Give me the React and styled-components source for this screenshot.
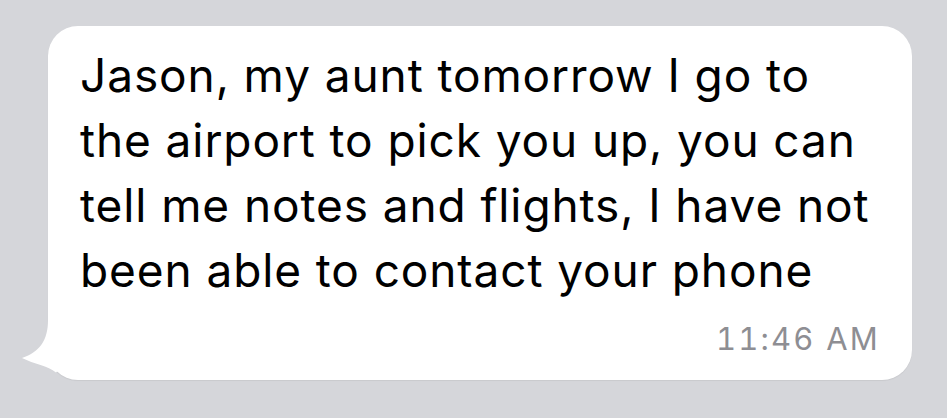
import React from 'react';
import styled, { createGlobalStyle } from 'styled-components';

const GlobalStyle = createGlobalStyle`
  html, body {
    margin: 0;
    padding: 0;
    background: #d5d6da;
  }
  body {
    font-family: Inter, "Noto Sans", "Liberation Sans", sans-serif;
  }
`;

const Screen = styled.div`
  width: 947px;
  height: 418px;
  box-sizing: border-box;
  padding: 26px 35px 0 48px;
  background: #d5d6da;
  overflow: hidden;
`;

const Bubble = styled.div`
  position: relative;
  width: 864px;
  box-sizing: border-box;
  padding: 17px 34px 23px 32px;
  background: #ffffff;
  border-radius: 30px;
  box-shadow: 0 1px 1px rgba(0, 0, 0, 0.06);
  display: flex;
  flex-direction: column;
`;

const Body = styled.p`
  margin: 0;
  font-size: 46px;
  line-height: 65px;
  color: #000;
  letter-spacing: 0.9px;
`;

const Line = styled.span`
  display: block;
  white-space: nowrap;
`;

const Time = styled.div`
  margin-top: 18px;
  align-self: flex-end;
  font-size: 31px;
  line-height: 36px;
  color: #8e8e93;
  font-variant-numeric: tabular-nums;
  letter-spacing: 2.2px;
  margin-right: -2px;
`;

const Tail = styled.svg`
  position: absolute;
  left: -30px;
  top: 282px;
  width: 70px;
  height: 80px;
  overflow: visible;
`;

const lines = [
  'Jason, my aunt tomorrow I go to',
  'the airport to pick you up, you can',
  'tell me notes and flights, I have not',
  'been able to contact your phone',
];

export default function App() {
  return (
    <>
      <GlobalStyle />
      <Screen>
        <Bubble>
          <Tail viewBox="-30 280 70 80">
            <path
              d="M0,292 C0,312 -8,324 -26,330 C-14,336 0,338 8,344.4 L30,324 L0,300 Z"
              fill="#ffffff"
            />
          </Tail>
          <Body>
            {lines.map((l) => (
              <Line key={l}>{l}</Line>
            ))}
          </Body>
          <Time>11:46 AM</Time>
        </Bubble>
      </Screen>
    </>
  );
}
